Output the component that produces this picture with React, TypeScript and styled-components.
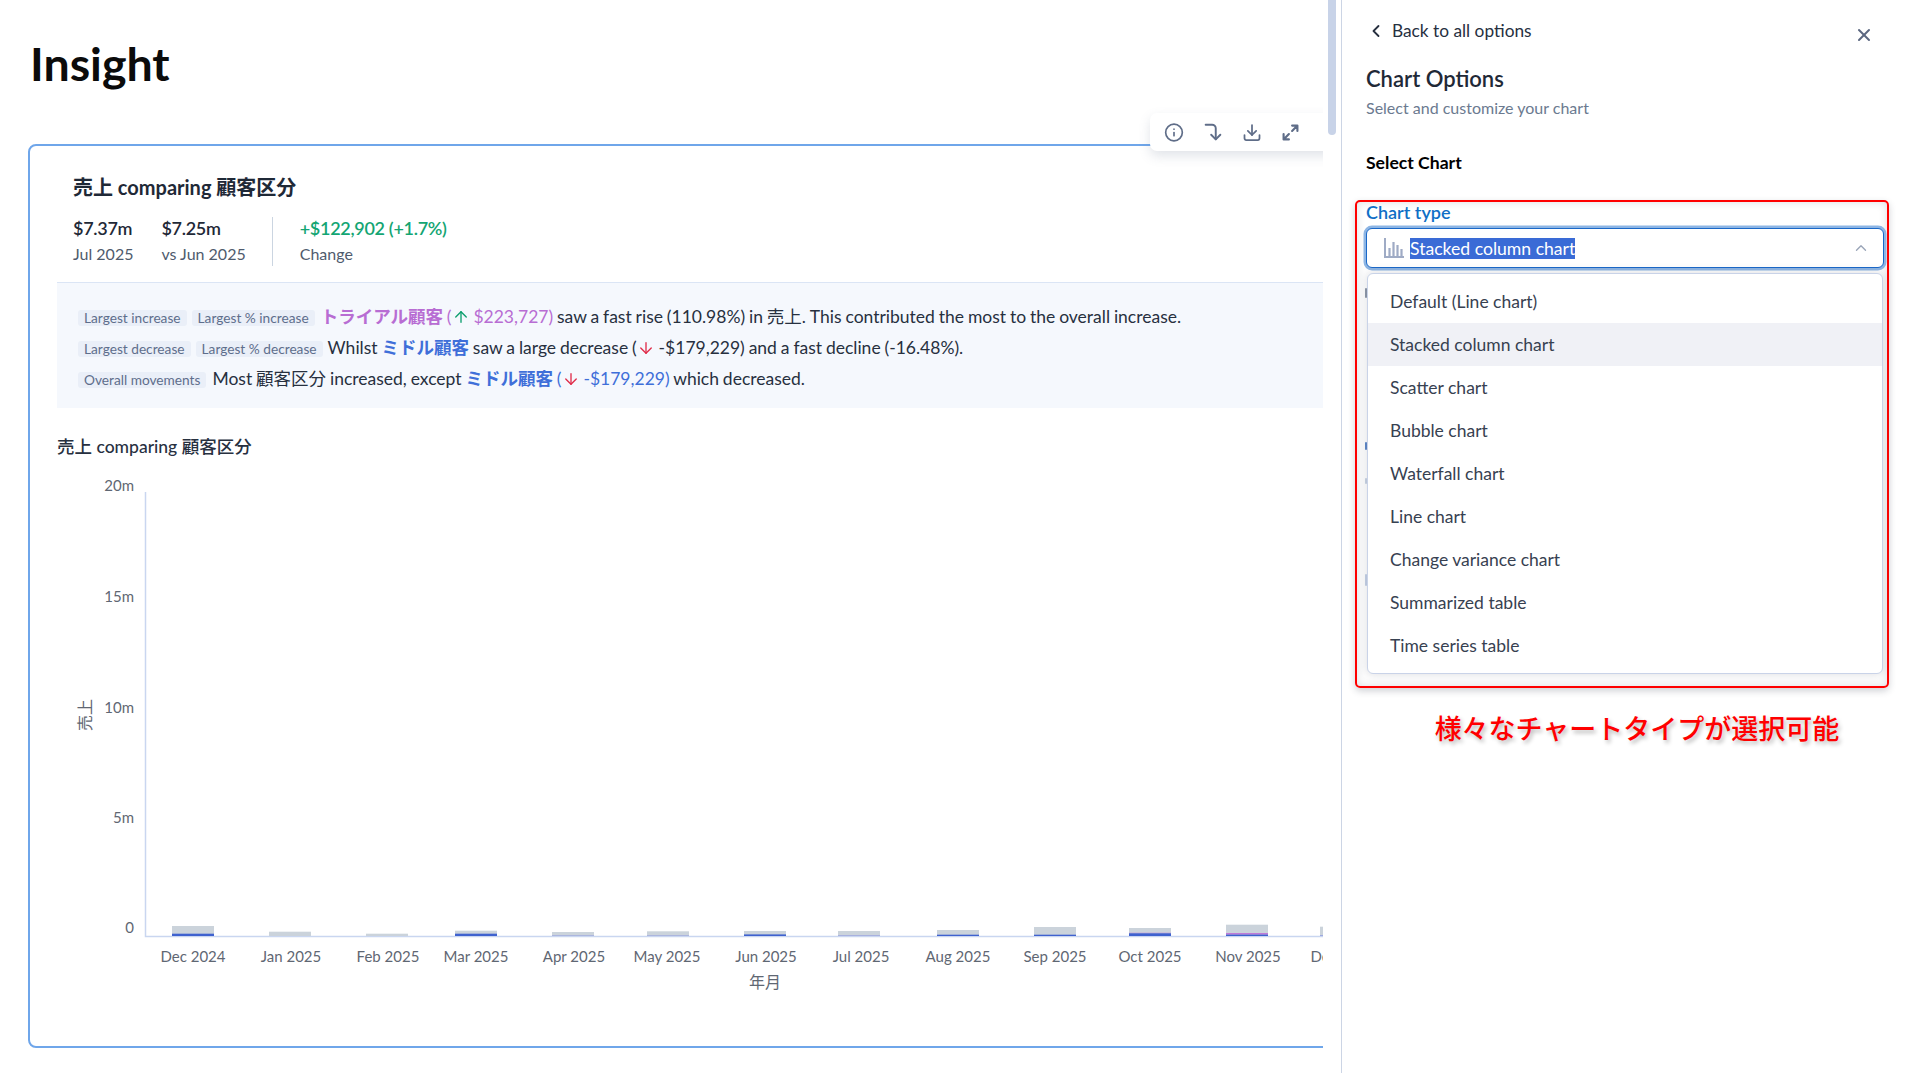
import React from 'react';
import styled, { createGlobalStyle } from 'styled-components';
import { ArrowDown, ArrowUp, ChevronLeft, ChevronUp, CornerRightDown, Download, Info, X } from 'lucide-react';

const GlobalStyle = createGlobalStyle`
  html, body {
    margin: 0;
    padding: 0;
    background: #ffffff;
    overflow: hidden;
  }
  body {
    font-family: Lato, "Noto Sans CJK JP", sans-serif;
    color: #27303f;
  }
  * {
    box-sizing: border-box;
  }
`;

const Page = styled.div`
  display: flex;
  width: 1907px;
  height: 1073px;
`;

const Main = styled.main`
  position: relative;
  flex: 0 0 1323px;
  height: 100%;
  overflow: hidden;
  padding-left: 28px;
`;

const PageTitle = styled.h1`
  margin: 34px 0 0 2px;
  height: 58px;
  font-size: 46.5px;
  line-height: 58px;
  font-weight: 700;
  color: #0b0b0b;
`;

const Card = styled.section`
  width: 1340px;
  height: 904px;
  margin-top: 52px;
  padding-left: 27px;
  border: 2px solid #6fa6ea;
  border-radius: 8px;
`;

const Toolbar = styled.div`
  position: absolute;
  top: 113px;
  left: 1150px;
  width: 200px;
  height: 38px;
  display: flex;
  align-items: center;
  padding-left: 14px;
  background: #ffffff;
  border-radius: 7px;
  box-shadow: 0 5px 12px rgba(90, 105, 135, 0.18);
  color: #5f6d88;
`;

const ToolIcon = styled.span<{ $w: number }>`
  display: flex;
  justify-content: center;
  width: ${(p) => p.$w}px;
`;

const CardHeader = styled.div`
  padding: 29px 0 0 16px;
`;

const CardTitle = styled.h2`
  margin: 0;
  font-size: 20px;
  line-height: 24px;
  font-weight: 700;
  color: #1f2937;
`;

const Stats = styled.div`
  display: flex;
  margin-top: 18px;
  height: 49px;
`;

const Stat = styled.div<{ $divider?: boolean }>`
  display: flex;
  flex-direction: column;
  gap: 4px;
  margin-right: ${(p) => (p.$divider ? 27 : 28)}px;
  ${(p) => p.$divider && `
    border-right: 1.5px solid #cbd5e1;
    padding-right: 26px;
  `}
`;

const StatValue = styled.div<{ $green?: boolean }>`
  font-size: 18px;
  line-height: 22px;
  font-weight: 600;
  letter-spacing: -0.3px;
  color: ${(p) => (p.$green ? '#14a573' : '#1f2937')};
`;

const StatLabel = styled.div`
  font-size: 16px;
  line-height: 22px;
  color: #4f5b6d;
`;

const InsightBox = styled.div`
  margin-top: 16px;
  height: 126px;
  padding: 18px 0 0 21px;
  background: #f5f8fd;
  border-top: 1px solid #dbe5f5;
`;

const InsightRow = styled.div`
  height: 31px;
  display: flex;
  align-items: center;
  font-size: 17.5px;
  word-spacing: -0.6px;
  line-height: 31px;
  white-space: pre;
  color: #27303f;
`;

const Tag = styled.span<{ $gap?: number }>`
  display: inline-block;
  height: 16px;
  margin: 2px ${(p) => p.$gap ?? 6}px 0 0;
  padding: 0 6px;
  border-radius: 3px;
  background: #eaeff8;
  color: #5e6e8c;
  font-size: 13.7px;
  word-spacing: 0;
  line-height: 16px;
`;

const Accent = styled.span<{ $color: string; $bold?: boolean }>`
  color: ${(p) => p.$color};
  font-weight: ${(p) => (p.$bold ? 700 : 400)};
`;

const ArrowSlot = styled.span<{ $color: string }>`
  display: inline-flex;
  color: ${(p) => p.$color};
`;

const ChartTitle = styled.h3`
  margin: 27px 0 0;
  font-size: 17.5px;
  line-height: 24px;
  font-weight: 500;
  color: #27303f;
`;

const ChartSvg = styled.svg`
  display: block;
  margin-top: 11px;
  text {
    font-family: Lato, "Noto Sans CJK JP", sans-serif;
    font-size: 15px;
    fill: #5f6773;
  }
`;

const ScrollGutter = styled.div`
  flex: 0 0 18px;
  padding-left: 5px;
`;

const ScrollThumb = styled.div`
  width: 8px;
  height: 135px;
  border-radius: 0 0 4px 4px;
  background: #c8d3e8;
`;

const Panel = styled.aside`
  flex: 1;
  min-width: 0;
  height: 100%;
  padding: 19px 23px 0 24px;
  border-left: 1px solid #ccd5e5;
`;

const PanelTop = styled.div`
  display: flex;
  justify-content: space-between;
  align-items: flex-start;
`;

const BackLink = styled.div`
  display: flex;
  align-items: center;
  gap: 6px;
  height: 24px;
  font-size: 17.3px;
  line-height: 24px;
  color: #27303f;
`;

const CloseButton = styled.div`
  display: flex;
  margin: 6px 10px 0 0;
  color: #5b6780;
`;

const PanelTitle = styled.h2`
  margin: 19px 0 0;
  font-size: 22px;
  line-height: 30px;
  font-weight: 600;
  color: #1f2937;
`;

const PanelSub = styled.p`
  margin: 3px 0 0;
  font-size: 16px;
  line-height: 22px;
  color: #6b7a90;
`;

const SectionTitle = styled.h3`
  margin: 32px 0 0;
  font-size: 17.6px;
  line-height: 24px;
  font-weight: 700;
  color: #000000;
`;

const RedFrame = styled.div`
  position: relative;
  width: 534px;
  height: 488px;
  margin: 25px 0 0 -11px;
  padding: 0 0 0 9px;
  border: 2px solid #ff0000;
  border-radius: 5px;
  box-shadow: 0 3px 7px rgba(40, 50, 70, 0.22), inset 0 0 9px rgba(40, 50, 70, 0.16);
`;

const FieldLabel = styled.label`
  display: block;
  height: 20px;
  font-size: 18px;
  line-height: 20px;
  font-weight: 600;
  color: #0f6fc6;
`;

const SelectBox = styled.div`
  display: flex;
  align-items: center;
  width: 518px;
  height: 40px;
  margin-top: 6px;
  padding-left: 17px;
  border: 1.5px solid #1a68c8;
  border-radius: 6px;
  background: #ffffff;
  box-shadow: 0 0 0 2.5px #8db5e4;
  color: #9aa5b8;
`;

const SelectedText = styled.span`
  margin-left: 6px;
  background: #3a6bd6;
  color: #ffffff;
  font-size: 17.6px;
  line-height: 21px;
`;

const SelectChevron = styled.span`
  display: flex;
  margin: 0 13px 0 auto;
`;

const PeekMark = styled.span<{ $top: number; $h: number; $color: string }>`
  position: absolute;
  left: 8px;
  top: ${(p) => p.$top}px;
  width: 2px;
  height: ${(p) => p.$h}px;
  border-radius: 1px;
  background: ${(p) => p.$color};
`;

const OptionList = styled.ul`
  position: relative;
  list-style: none;
  width: 516px;
  height: 401px;
  margin: 5px 0 0 1px;
  padding: 6px 0;
  background: #ffffff;
  border: 1px solid #c9d3e8;
  border-radius: 6px;
  box-shadow: 0 0 10px 1px rgba(60, 70, 90, 0.16);
`;

const Option = styled.li<{ $active?: boolean }>`
  height: 43px;
  padding-left: 22px;
  font-size: 17.5px;
  line-height: 43px;
  color: #374151;
  background: ${(p) => (p.$active ? '#f0f1f6' : 'transparent')};
`;

const Caption = styled.div`
  width: 516px;
  margin: 21px 0 0 13px;
  font-size: 27px;
  line-height: 40px;
  font-weight: 500;
  text-align: center;
  color: #ff0000;
  text-shadow: 2px 3px 4px rgba(0, 0, 0, 0.28);
`;

const ExpandIcon = () => (
  <svg width="17" height="17" viewBox="0 0 16 16" fill="none" stroke="currentColor" strokeWidth="2" strokeLinecap="round" strokeLinejoin="round">
    <path d="M9.5 1.5h5v5M14.5 1.5 9.5 6.5M6.5 14.5h-5v-5M1.5 14.5l5-5" />
  </svg>
);

const ColumnIcon = () => (
  <svg width="20" height="20" viewBox="0 0 20 20" fill="none" stroke="#9fabc5" strokeWidth="2">
    <path d="M1 0v19h19" />
    <path d="M5.5 18v-8M9.5 18V4M13.5 18V7M17.5 18v-7" strokeWidth="2.2" />
  </svg>
);

type Bar = { label: string; cx: number; x: number; total: number; blue: number; purple: number };

const bars: Bar[] = [
  { label: 'Dec 2024', cx: 193, x: 172, total: 10, blue: 2.3, purple: 0 },
  { label: 'Jan 2025', cx: 291, x: 269, total: 4.3, blue: 0, purple: 0 },
  { label: 'Feb 2025', cx: 388, x: 366, total: 2.3, blue: 0, purple: 0 },
  { label: 'Mar 2025', cx: 476, x: 455, total: 5.3, blue: 2.3, purple: 0 },
  { label: 'Apr 2025', cx: 574, x: 552, total: 4, blue: 0.7, purple: 0 },
  { label: 'May 2025', cx: 667, x: 647, total: 4.7, blue: 0.7, purple: 0 },
  { label: 'Jun 2025', cx: 766, x: 744, total: 5, blue: 1.6, purple: 0 },
  { label: 'Jul 2025', cx: 861, x: 838, total: 5, blue: 0.8, purple: 0 },
  { label: 'Aug 2025', cx: 958, x: 937, total: 6, blue: 1.3, purple: 0 },
  { label: 'Sep 2025', cx: 1055, x: 1034, total: 9, blue: 1.3, purple: 0 },
  { label: 'Oct 2025', cx: 1150, x: 1129, total: 8, blue: 2.7, purple: 0.5 },
  { label: 'Nov 2025', cx: 1248, x: 1226, total: 11.3, blue: 1.4, purple: 1.6 },
  { label: 'Dec 2025', cx: 1343, x: 1320, total: 9.3, blue: 1, purple: 0 },
];

const yTicks = [
  { label: '20m', y: 485 },
  { label: '15m', y: 595.5 },
  { label: '10m', y: 706.5 },
  { label: '5m', y: 817 },
  { label: '0', y: 927 },
];

const BASE_Y = 936;

const Chart = () => (
  <ChartSvg width="1266" height="530" viewBox="57 470 1266 530">
    <path d="M145.5 492V936.5H1323" fill="none" stroke="#c9d6f0" strokeWidth="1.5" />
    {yTicks.map((t) => (
      <text key={t.label} x="134" y={t.y} textAnchor="end" dominantBaseline="central">{t.label}</text>
    ))}
    <text x="84" y="715" textAnchor="middle" dominantBaseline="central" transform="rotate(-90 84 715)" style={{ fontSize: 16 }}>売上</text>
    {bars.map((b) => (
      <g key={b.label}>
        <rect x={b.x} y={BASE_Y - b.total} width="42" height={b.total} fill="#cbd3db" />
        {b.purple > 0 && <rect x={b.x} y={BASE_Y - b.blue - b.purple} width="42" height={b.purple} fill="#c07ad8" />}
        <rect x={b.x} y={BASE_Y - b.blue} width="42" height={b.blue} fill={b.blue > 1.2 ? '#3f62cf' : '#9fa9e0'} />
        <text x={b.cx} y="955.5" textAnchor="middle" dominantBaseline="central">{b.label}</text>
      </g>
    ))}
    <text x="765" y="981" textAnchor="middle" dominantBaseline="central" style={{ fontSize: 16 }}>年月</text>
  </ChartSvg>
);

const options = [
  'Default (Line chart)',
  'Stacked column chart',
  'Scatter chart',
  'Bubble chart',
  'Waterfall chart',
  'Line chart',
  'Change variance chart',
  'Summarized table',
  'Time series table',
];

const PURPLE = '#b86dd3';
const BLUE = '#3f6fd9';

export default function App() {
  return (
    <Page>
      <GlobalStyle />
      <Main>
        <PageTitle>Insight</PageTitle>
        <Card>
          <CardHeader>
            <CardTitle>売上 comparing 顧客区分</CardTitle>
            <Stats>
              <Stat>
                <StatValue>$7.37m</StatValue>
                <StatLabel>Jul 2025</StatLabel>
              </Stat>
              <Stat $divider>
                <StatValue>$7.25m</StatValue>
                <StatLabel>vs Jun 2025</StatLabel>
              </Stat>
              <Stat>
                <StatValue $green>+$122,902 (+1.7%)</StatValue>
                <StatLabel>Change</StatLabel>
              </Stat>
            </Stats>
          </CardHeader>
          <InsightBox>
            <InsightRow>
              <Tag $gap={5}>Largest increase</Tag>
              <Tag $gap={6}>Largest % increase</Tag>
              <Accent $color={PURPLE} $bold>トライアル顧客</Accent>
              <Accent $color={PURPLE}> (</Accent>
              <ArrowSlot $color="#0d9f6e"><ArrowUp size={18} strokeWidth={1.8} /></ArrowSlot>
              <Accent $color={PURPLE}> $223,727)</Accent>
              {' saw a fast rise (110.98%) in 売上. This contributed the most to the overall increase.'}
            </InsightRow>
            <InsightRow>
              <Tag $gap={5}>Largest decrease</Tag>
              <Tag $gap={5}>Largest % decrease</Tag>
              {'Whilst '}
              <Accent $color={BLUE} $bold>ミドル顧客</Accent>
              {' saw a large decrease ('}
              <ArrowSlot $color="#e02d4a"><ArrowDown size={18} strokeWidth={1.8} /></ArrowSlot>
              {' -$179,229) and a fast decline (-16.48%).'}
            </InsightRow>
            <InsightRow>
              <Tag>Overall movements</Tag>
              {'Most 顧客区分 increased, except '}
              <Accent $color={BLUE} $bold>ミドル顧客</Accent>
              <Accent $color={BLUE}> (</Accent>
              <ArrowSlot $color="#e02d4a"><ArrowDown size={18} strokeWidth={1.8} /></ArrowSlot>
              <Accent $color={BLUE}> -$179,229)</Accent>
              {' which decreased.'}
            </InsightRow>
          </InsightBox>
          <ChartTitle>売上 comparing 顧客区分</ChartTitle>
          <Chart />
        </Card>
        <Toolbar>
          <ToolIcon $w={20}><Info size={23} strokeWidth={2} /></ToolIcon>
          <ToolIcon $w={58}><CornerRightDown size={22} strokeWidth={2.1} /></ToolIcon>
          <ToolIcon $w={20}><Download size={25} strokeWidth={2.1} /></ToolIcon>
          <ToolIcon $w={56}><ExpandIcon /></ToolIcon>
        </Toolbar>
      </Main>
      <ScrollGutter>
        <ScrollThumb />
      </ScrollGutter>
      <Panel>
        <PanelTop>
          <BackLink>
            <ChevronLeft size={20} strokeWidth={2.2} />
            Back to all options
          </BackLink>
          <CloseButton><X size={20} strokeWidth={2.4} /></CloseButton>
        </PanelTop>
        <PanelTitle>Chart Options</PanelTitle>
        <PanelSub>Select and customize your chart</PanelSub>
        <SectionTitle>Select Chart</SectionTitle>
        <RedFrame>
          <FieldLabel>Chart type</FieldLabel>
          <SelectBox>
            <ColumnIcon />
            <SelectedText>Stacked column chart</SelectedText>
            <SelectChevron><ChevronUp size={18} strokeWidth={1.8} /></SelectChevron>
          </SelectBox>
          <PeekMark $top={86} $h={10} $color="#8d97a8" />
          <PeekMark $top={240} $h={8} $color="#5d87c8" />
          <PeekMark $top={276} $h={6} $color="#c9d3e3" />
          <PeekMark $top={372} $h={12} $color="#c4d0e6" />
          <OptionList>
            {options.map((o) => (
              <Option key={o} $active={o === 'Stacked column chart'}>{o}</Option>
            ))}
          </OptionList>
        </RedFrame>
        <Caption>様々なチャートタイプが選択可能</Caption>
      </Panel>
    </Page>
  );
}
